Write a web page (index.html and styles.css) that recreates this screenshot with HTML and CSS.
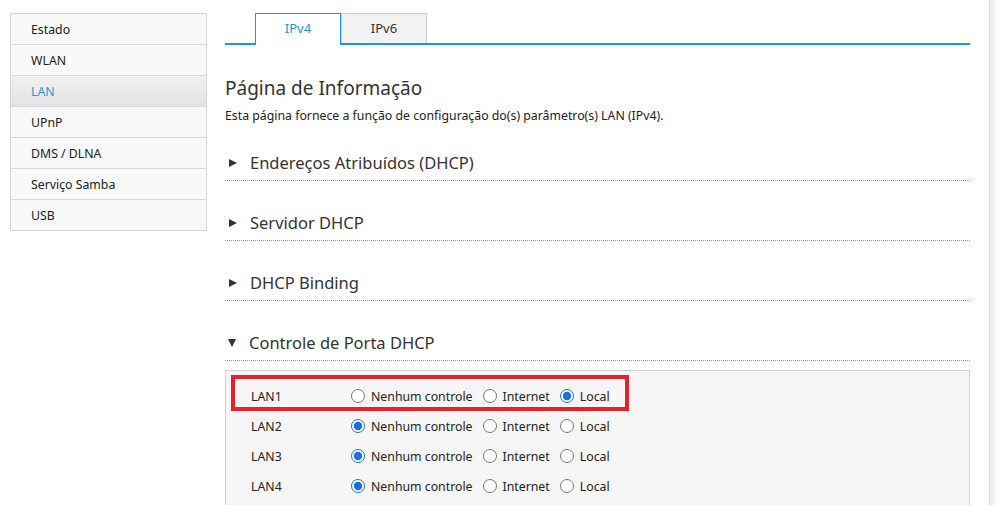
FILE: index.html
```html
<!DOCTYPE html>
<html lang="pt-BR">
<head>
    <meta charset="UTF-8">
    <meta name="viewport" content="width=device-width, initial-scale=1.0">
    <title>LAN</title>
    <link rel="stylesheet" href="styles.css">
</head>
<body>
    <div class="page">
        <ul class="side-menu">
            <li>Estado</li>
            <li>WLAN</li>
            <li class="active">LAN</li>
            <li>UPnP</li>
            <li>DMS / DLNA</li>
            <li>Serviço Samba</li>
            <li>USB</li>
        </ul>

        <div class="content">
            <div class="tabs">
                <span class="tab active">IPv4</span>
                <span class="tab">IPv6</span>
            </div>

            <h1 class="page-title">Página de Informação</h1>
            <p class="page-desc">Esta página fornece a função de configuração do(s) parâmetro(s) LAN (IPv4).</p>

            <div class="section"><span class="arrow"></span>Endereços Atribuídos (DHCP)</div>
            <div class="section"><span class="arrow"></span>Servidor DHCP</div>
            <div class="section"><span class="arrow"></span>DHCP Binding</div>
            <div class="section open"><span class="arrow"></span>Controle de Porta DHCP</div>

            <div class="port-panel">
                <div class="mark"></div>
                <div class="port-row">
                    <span class="port-name">LAN1</span>
                    <label class="opt"><input type="radio" name="lan1">Nenhum controle</label>
                    <label class="opt"><input type="radio" name="lan1">Internet</label>
                    <label class="opt"><input type="radio" name="lan1" checked>Local</label>
                </div>
                <div class="port-row">
                    <span class="port-name">LAN2</span>
                    <label class="opt"><input type="radio" name="lan2" checked>Nenhum controle</label>
                    <label class="opt"><input type="radio" name="lan2">Internet</label>
                    <label class="opt"><input type="radio" name="lan2">Local</label>
                </div>
                <div class="port-row">
                    <span class="port-name">LAN3</span>
                    <label class="opt"><input type="radio" name="lan3" checked>Nenhum controle</label>
                    <label class="opt"><input type="radio" name="lan3">Internet</label>
                    <label class="opt"><input type="radio" name="lan3">Local</label>
                </div>
                <div class="port-row">
                    <span class="port-name">LAN4</span>
                    <label class="opt"><input type="radio" name="lan4" checked>Nenhum controle</label>
                    <label class="opt"><input type="radio" name="lan4">Internet</label>
                    <label class="opt"><input type="radio" name="lan4">Local</label>
                </div>
            </div>
        </div>

        <div class="edge"></div>
    </div>
</body>
</html>
```

FILE: styles.css
```css
html, body {
    margin: 0;
    padding: 0;
    height: 100%;
    overflow: hidden;
    background: #fff;
}

body {
    font-family: "Noto Sans", "Noto Sans CJK SC", sans-serif;
    font-size: 12.3px;
    color: #333;
}

.page {
    display: flex;
    min-height: 100%;
}

/* menu da esquerda */
.side-menu {
    list-style: none;
    margin: 13px 0 0 10px;
    padding: 0;
    width: 197px;
    align-self: flex-start;
    box-sizing: border-box;
    border: 1px solid #d4d4d4;
    background: #f9f9f9;
}

.side-menu li {
    height: 29px;
    padding: 1px 0 0 20px;
    line-height: 30px;
    color: #222;
    border-top: 1px solid #d8d8d8;
}

.side-menu li:first-child {
    border-top: none;
}

.side-menu li.active {
    color: #1a9ad6;
    background: linear-gradient(#f1f1f1, #e3e3e3);
}

.content {
    width: 745px;
    margin-left: 18px;
}

/* abas */
.tabs {
    display: flex;
    margin-top: 13px;
    padding-left: 30px;
    border-bottom: 2px solid #1a9ad6;
}

.tab {
    width: 84px;
    height: 29px;
    line-height: 29px;
    text-align: center;
    font-size: 13px;
    border: 1px solid #cfcfcf;
    border-bottom: none;
    background: #f2f2f2;
    color: #333;
}

.tab.active {
    color: #1a9ad6;
    background: #fff;
    border-color: #1a9ad6;
    margin-bottom: -2px;
    padding-bottom: 2px;
}

.page-title {
    margin: 29px 0 0;
    font-size: 19px;
    font-weight: normal;
    line-height: 28px;
    color: #333;
}

.page-desc {
    margin: 7px 0 0;
    font-size: 12.3px;
    line-height: 14px;
    color: #222;
}

/* blocos recolhiveis */
.section {
    display: flex;
    align-items: center;
    padding: 30px 0 5px;
    line-height: 24px;
    font-size: 16.5px;
    color: #333;
    border-bottom: 1px dotted #999;
}

.page-desc + .section {
    padding-top: 28px;
}

.arrow {
    width: 0;
    height: 0;
    margin: 0 13px 0 4px;
    border-top: 4.5px solid transparent;
    border-bottom: 4.5px solid transparent;
    border-left: 8px solid #333;
}

.section.open .arrow {
    margin-left: 3px;
    border-top: 8px solid #333;
    border-left: 4.5px solid transparent;
    border-right: 4.5px solid transparent;
    border-bottom: none;
}

/* controle de porta */
.port-panel {
    position: relative;
    margin-top: 9px;
    padding: 10px 0 20px 25px;
    border: 1px solid #d0d0d0;
    background: #f6f6f6;
}

.mark {
    position: absolute;
    left: 5px;
    top: 4px;
    width: 398px;
    height: 36px;
    box-sizing: border-box;
    border: 4px solid #e8202a;
}

.port-row {
    display: flex;
    align-items: center;
    height: 30px;
}

.port-name {
    width: 100px;
    color: #222;
}

.opt {
    display: inline-flex;
    align-items: center;
    margin-right: 10px;
    color: #222;
}

.opt input {
    width: 14px;
    height: 14px;
    margin: 0 6px 0 0;
    accent-color: #1a6fd8;
}

/* borda direita da janela */
.edge {
    width: 6px;
    margin-left: auto;
    border-left: 1px solid #dadada;
    background: linear-gradient(to right, #ebebeb, #f7f7f7);
}
```
